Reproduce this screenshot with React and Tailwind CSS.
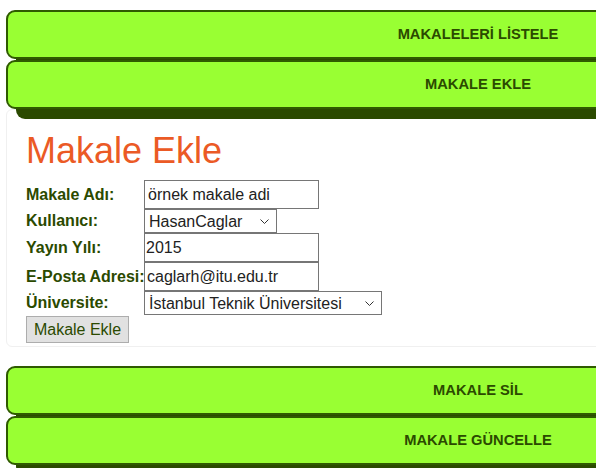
import React from "react";

const navItems = {
    top: ["MAKALELERİ LİSTELE", "MAKALE EKLE"],
    bottom: ["MAKALE SİL", "MAKALE GÜNCELLE"],
};

function NavButton({ label }) {
    return (
        <div className="h-[49px] mb-[1px] flex items-center justify-center rounded-[9px] border-2 border-[#2f5a00] bg-[#99ff33] shadow-[10px_10px_0_#2b4a00] text-[14.7px] font-bold text-[#2b4a00] relative">
            {label}
        </div>
    );
}

function Select({ width, value }) {
    return (
        <div className={`relative h-[24px] ${width}`}>
            <select className="appearance-none w-full h-full border border-[#767676] bg-white pl-[4px] text-[#222]">
                <option>{value}</option>
            </select>
            {/* thin chevron like the native one */}
            <svg className="absolute right-[8px] top-[10px] w-[9px] h-[5px] pointer-events-none" viewBox="0 0 9 5" fill="none">
                <path d="M0.5 0.5 L4.5 4.5 L8.5 0.5" stroke="#333" strokeWidth="1" />
            </svg>
        </div>
    );
}

export default function App() {
    return (
        <div className="w-[596px] h-[468px] overflow-hidden bg-white font-['Liberation_Sans',Arial,sans-serif]">
            <div className="w-[944px] ml-[6px] pt-[10px]">
                {navItems.top.map((item) => (
                    <NavButton key={item} label={item} />
                ))}

                {/* form panel */}
                <div className="-mt-[1px] mb-[19px] rounded-[6px] border border-[#f0f0f0] pl-[19px] pt-[20px] pb-[3px]">
                    <h1 className="text-[36px] leading-[41px] text-[#eb5a25]">Makale Ekle</h1>
                    <div className="mt-[9px] grid grid-cols-[118px_auto] items-center text-[16px] text-[#2b4a00] whitespace-nowrap">
                        <label className="font-bold">Makale Adı:</label>
                        <input
                            type="text"
                            defaultValue="örnek makale adi"
                            className="w-[175px] h-[29px] border border-[#767676] px-[3px] text-[#222]"
                        />
                        <label className="font-bold">Kullanıcı:</label>
                        <Select width="w-[133px]" value="HasanCaglar" />
                        <label className="font-bold">Yayın Yılı:</label>
                        <input
                            type="text"
                            defaultValue="2015"
                            className="w-[175px] h-[29px] border border-[#767676] px-[1px] text-[#222]"
                        />
                        <label className="font-bold">E-Posta Adresi:</label>
                        <input
                            type="text"
                            defaultValue="caglarh@itu.edu.tr"
                            className="w-[175px] h-[29px] border border-[#767676] px-[2px] text-[#222]"
                        />
                        <label className="font-bold">Üniversite:</label>
                        <Select width="w-[238px]" value="İstanbul Teknik Üniversitesi" />
                    </div>
                    <button className="mt-[1px] h-[27px] w-[103px] border border-[#adadad] bg-[#e1e1e1] text-[16px] text-[#2b4a00]">
                        Makale Ekle
                    </button>
                </div>

                {navItems.bottom.map((item) => (
                    <NavButton key={item} label={item} />
                ))}
            </div>
        </div>
    );
}
